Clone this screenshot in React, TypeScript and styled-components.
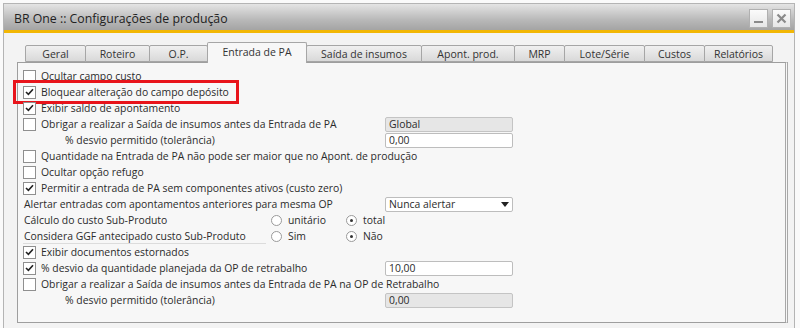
import React, { FC } from 'react';
import styled, { createGlobalStyle } from 'styled-components';

const GlobalStyle = createGlobalStyle`
  body {
    margin: 0;
    background: #fafafa;
    font-family: 'Open Sans', 'Liberation Sans', sans-serif;
    color: #2b2b2b;
  }
`;

const Window = styled.div`
  margin: 3px 5px 0 3px;
  height: 325px;
  border: 1px solid #b4b4b4;
  border-bottom: none;
  background: #f3f3f3;
  box-sizing: border-box;
`;

const TitleBar = styled.div`
  height: 26px;
  display: flex;
  align-items: center;
  justify-content: space-between;
  padding: 0 3px 0 10px;
  background: linear-gradient(#e4e4e4, #b9b9b9 60%, #a4a4a4);
  border-bottom: 3px solid #f2b705;
`;

const Title = styled.span`
  font-size: 12.3px;
  color: #222;
  padding-top: 2px;
`;

const WinButtons = styled.div`
  display: flex;
  gap: 4px;
  padding-top: 3px;
`;

const WinButton = styled.div`
  width: 19px;
  height: 19px;
  box-sizing: border-box;
  border: 1px solid #b0b0b0;
  background: linear-gradient(#fbfbfb, #e6e6e6);
  display: flex;
  align-items: center;
  justify-content: center;
`;

const Body = styled.div`
  padding: 9px 7px 0 13px;
`;

const TabBar = styled.div`
  display: flex;
  align-items: flex-end;
  height: 20px;
  padding-left: 8px;
  position: relative;
  z-index: 1;
`;

const Tab = styled.div<{ $w: number; $active?: boolean }>`
  width: ${(p) => p.$w}px;
  height: ${(p) => (p.$active ? 21 : 17)}px;
  margin-left: -1px;
  margin-bottom: ${(p) => (p.$active ? -1 : 0)}px;
  box-sizing: border-box;
  border: 1px solid #a6a6a6;
  border-bottom: ${(p) => (p.$active ? 'none' : '1px solid #a6a6a6')};
  border-radius: 2px 2px 0 0;
  background: ${(p) => (p.$active ? '#f7f7f7' : 'linear-gradient(#f0f0f0, #d9d9d9)')};
  font-size: 10.5px;
  color: #333;
  display: flex;
  align-items: center;
  justify-content: center;
  padding-bottom: ${(p) => (p.$active ? 3 : 0)}px;
  &:first-child { margin-left: 0; }
`;

const Panel = styled.div`
  width: 771px;
  height: 261px;
  box-sizing: border-box;
  border: 1px solid #9e9e9e;
  border-right: 3px double #a8a8a8;
  background: #f7f7f7;
  padding: 5px 0 0 5px;
`;

const Row = styled.div<{ $cols?: string }>`
  height: 16px;
  display: grid;
  grid-template-columns: ${(p) => p.$cols || '362px 128px'};
  align-items: center;
  font-size: 10.4px;
  position: relative;
`;

const Highlight = styled.div`
  position: absolute;
  left: -10px;
  top: -4px;
  width: 226px;
  height: 24px;
  box-sizing: border-box;
  border: 3px solid #e8141b;
  pointer-events: none;
`;

const Check = styled.label<{ $indent?: number }>`
  display: flex;
  align-items: center;
  gap: 5px;
  padding-left: ${(p) => p.$indent || 0}px;
  white-space: nowrap;
`;

const Box = styled.span`
  width: 13px;
  height: 13px;
  box-sizing: border-box;
  border: 1px solid #8f8f8f;
  background: #fff;
  display: inline-flex;
  align-items: center;
  justify-content: center;
  flex: none;
`;

const Label = styled.span<{ $indent?: number; $line?: boolean }>`
  padding-left: ${(p) => p.$indent || 1}px;
  white-space: nowrap;
  ${(p) => p.$line && 'border-bottom: 1px solid #dcdcdc; margin-right: 5px; line-height: 14px;'}
`;

const Field = styled.div<{ $disabled?: boolean }>`
  height: 15px;
  box-sizing: border-box;
  border: 1px solid ${(p) => (p.$disabled ? '#c4c4c4' : '#bdbdbd')};
  border-radius: 2px;
  background: ${(p) => (p.$disabled ? '#e6e6e6' : '#fff')};
  padding: 0 3px;
  font-size: 10.4px;
  line-height: 13px;
  display: flex;
  align-items: center;
  justify-content: space-between;
`;

const RadioOpt = styled.label`
  display: flex;
  align-items: center;
  gap: 6px;
`;

const Circle = styled.span<{ $on?: boolean }>`
  width: 11px;
  height: 11px;
  box-sizing: border-box;
  border: 1px solid #9a9a9a;
  border-radius: 50%;
  background: #fff;
  display: inline-flex;
  align-items: center;
  justify-content: center;
  &::after {
    content: '';
    width: 3px;
    height: 3px;
    border-radius: 50%;
    background: ${(p) => (p.$on ? '#333' : 'transparent')};
  }
`;

const Tick = () => (
  <svg width="9" height="8" viewBox="0 0 9 8">
    <path d="M1 4 L3.4 6.4 L8 1.2" fill="none" stroke="#222" strokeWidth="1.6" />
  </svg>
);

const CheckItem: FC<{ on?: boolean; indent?: number; children: React.ReactNode }> = ({ on, indent, children }) => (
  <Check $indent={indent}>
    <Box>{on && <Tick />}</Box>
    <span>{children}</span>
  </Check>
);

const tabs: [string, number][] = [
  ['Geral', 61],
  ['Roteiro', 65],
  ['O.P.', 59],
  ['Entrada de PA', 100],
  ['Saída de insumos', 116],
  ['Apont. prod.', 94],
  ['MRP', 51],
  ['Lote/Série', 81],
  ['Custos', 61],
  ['Relatórios', 69],
];

const App: FC = () => (
  <>
    <GlobalStyle />
    <Window>
      <TitleBar>
        <Title>BR One :: Configurações de produção</Title>
        <WinButtons>
          <WinButton>
            <svg width="11" height="11" viewBox="0 0 11 11">
              <rect x="1" y="8" width="9" height="2" fill="#8a8a8a" />
            </svg>
          </WinButton>
          <WinButton>
            <svg width="11" height="11" viewBox="0 0 11 11">
              <path d="M1.5 1.5 L9.5 9.5 M9.5 1.5 L1.5 9.5" stroke="#8a8a8a" strokeWidth="2.2" />
            </svg>
          </WinButton>
        </WinButtons>
      </TitleBar>
      <Body>
        <TabBar>
          {tabs.map(([name, w]) => (
            <Tab key={name} $w={w} $active={name === 'Entrada de PA'}>
              {name}
            </Tab>
          ))}
        </TabBar>
        <Panel>
          <Row>
            <CheckItem>Ocultar campo custo</CheckItem>
          </Row>
          <Row>
            <CheckItem on>Bloquear alteração do campo depósito</CheckItem>
            <Highlight />
          </Row>
          <Row>
            <CheckItem on>Exibir saldo de apontamento</CheckItem>
          </Row>
          <Row>
            <CheckItem>Obrigar a realizar a Saída de insumos antes da Entrada de PA</CheckItem>
            <Field $disabled>Global</Field>
          </Row>
          <Row>
            <Label $indent={42}>% desvio permitido (tolerância)</Label>
            <Field>0,00</Field>
          </Row>
          <Row>
            <CheckItem>Quantidade na Entrada de PA não pode ser maior que no Apont. de produção</CheckItem>
          </Row>
          <Row>
            <CheckItem>Ocultar opção refugo</CheckItem>
          </Row>
          <Row>
            <CheckItem on>Permitir a entrada de PA sem componentes ativos (custo zero)</CheckItem>
          </Row>
          <Row>
            <Label>Alertar entradas com apontamentos anteriores para mesma OP</Label>
            <Field>
              <span>Nunca alertar</span>
              <svg width="8" height="5" viewBox="0 0 8 5">
                <path d="M0 0 H8 L4 5 Z" fill="#222" />
              </svg>
            </Field>
          </Row>
          <Row $cols="248px 75px auto">
            <Label>Cálculo do custo Sub-Produto</Label>
            <RadioOpt>
              <Circle />
              unitário
            </RadioOpt>
            <RadioOpt>
              <Circle $on />
              total
            </RadioOpt>
          </Row>
          <Row $cols="248px 75px auto">
            <Label $line>Considera GGF antecipado custo Sub-Produto</Label>
            <RadioOpt>
              <Circle />
              Sim
            </RadioOpt>
            <RadioOpt>
              <Circle $on />
              Não
            </RadioOpt>
          </Row>
          <Row>
            <CheckItem on>Exibir documentos estornados</CheckItem>
          </Row>
          <Row>
            <CheckItem on>% desvio da quantidade planejada da OP de retrabalho</CheckItem>
            <Field>10,00</Field>
          </Row>
          <Row>
            <CheckItem>Obrigar a realizar a Saída de insumos antes da Entrada de PA na OP de Retrabalho</CheckItem>
          </Row>
          <Row>
            <Label $indent={42}>% desvio permitido (tolerância)</Label>
            <Field $disabled>0,00</Field>
          </Row>
        </Panel>
      </Body>
    </Window>
  </>
);

export default App;
